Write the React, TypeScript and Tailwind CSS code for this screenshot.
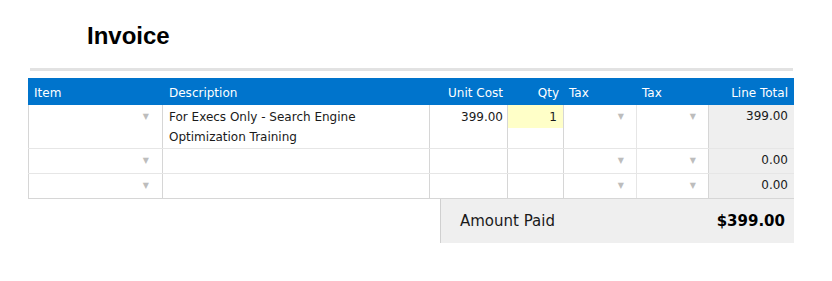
import React from 'react';

const COLS = 'grid grid-cols-[135px_267px_78px_56px_73px_72px_85px]';

function Caret() {
  return <span className="text-[8px] leading-none text-[#bdbdbd]">▼</span>;
}

type Row = {
  desc?: string[];
  cost?: string;
  qty?: string;
  total: string;
  tall?: boolean;
};

const ROWS: Row[] = [
  { desc: ['For Execs Only - Search Engine', 'Optimization Training'], cost: '399.00', qty: '1', total: '399.00', tall: true },
  { total: '0.00' },
  { total: '0.00' },
];

export default function App() {
  return (
    <div className="w-[832px] h-[281px] bg-white font-['DejaVu_Sans',Verdana,sans-serif] text-[#1a1a1a]">
      <div className="pt-[22px] pl-[87px] h-[68px]">
        <h1 className="font-['Liberation_Sans',Arial,sans-serif] font-bold text-[24px] leading-[28px] text-black">Invoice</h1>
      </div>
      <div className="ml-[30px] w-[763px] h-[3px] bg-[#e2e2e2]" />
      <div className="ml-[28px] mt-[7px] w-[766px]">
        <div className={`${COLS} h-[27px] pt-[2px] bg-[#0074cc] text-white text-[12px] items-center`}>
          <div className="pl-[6px]">Item</div>
          <div className="pl-[6px]">Description</div>
          <div className="text-right pr-[5px]">Unit Cost</div>
          <div className="text-right pr-[5px]">Qty</div>
          <div className="pl-[5px]">Tax</div>
          <div className="pl-[5px]">Tax</div>
          <div className="text-right pr-[6px]">Line Total</div>
        </div>
        <div className="border-l border-b border-[#d6d6d6]">
          {ROWS.map((r, i) => (
            <div
              key={i}
              className={`${COLS} ${r.tall ? 'h-[43px]' : 'h-[25px]'} ${i > 0 ? 'border-t border-[#e6e6e6]' : ''} text-[12px] -ml-px`}
            >
              <div className="flex justify-end items-start pt-[8px] pr-[13px] border-r border-[#d6d6d6]">
                <Caret />
              </div>
              <div className="pl-[6px] pt-[2px] leading-[20px] border-r border-[#d6d6d6]">
                {r.desc?.map((l) => <div key={l}>{l}</div>)}
              </div>
              <div className="text-right pr-[4px] pt-[2px] leading-[20px] border-r border-[#d6d6d6]">{r.cost}</div>
              <div className="border-r border-[#d6d6d6]">
                {r.qty && (
                  <div className="bg-[#ffffc8] h-[23px] leading-[20px] pt-[2px] text-right pr-[6px]">{r.qty}</div>
                )}
              </div>
              <div className="flex justify-end items-start pt-[8px] pr-[12px] border-r border-[#e6e6e6]">
                <Caret />
              </div>
              <div className="flex justify-end items-start pt-[8px] pr-[12px] border-r border-[#d6d6d6]">
                <Caret />
              </div>
              <div className="bg-[#efefef] text-right pr-[6px] pt-[1px] leading-[20px]">{r.total}</div>
            </div>
          ))}
        </div>
        <div className="ml-[412px] w-[354px] h-[44px] bg-[#efefef] border-l border-[#d0d0d0] flex items-center justify-between pl-[19px] pr-[9px]">
          <span className="text-[15px]">Amount Paid</span>
          <span className="text-[15px] font-bold text-black">$399.00</span>
        </div>
      </div>
    </div>
  );
}
